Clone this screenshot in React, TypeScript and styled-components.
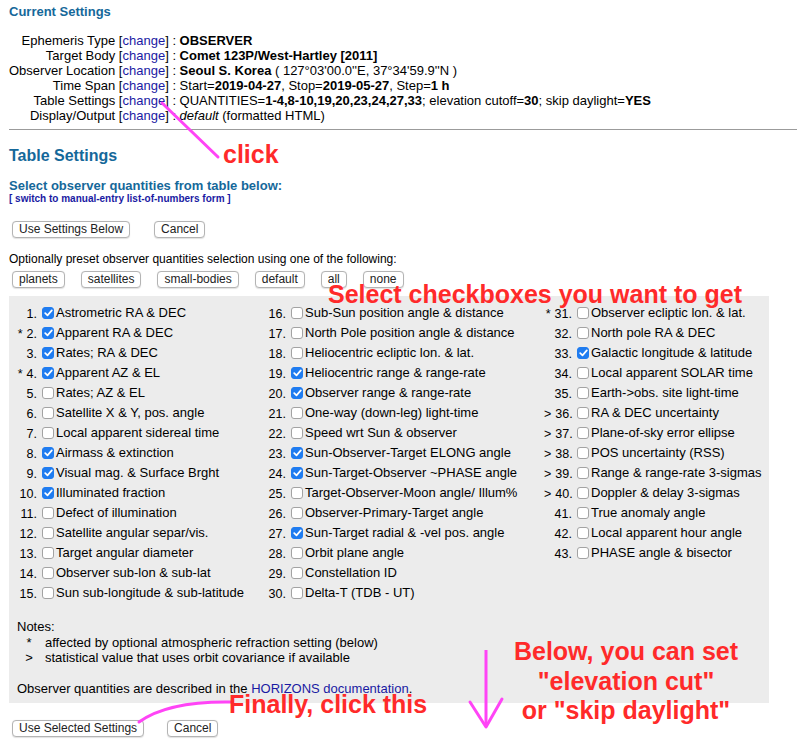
import React from "react";
import styled, { createGlobalStyle } from "styled-components";

const GlobalStyle = createGlobalStyle`
  html, body { margin: 0; padding: 0; background: #fff; }
  body { font-family: "Liberation Sans", Arial, Helvetica, sans-serif; color: #000; }
  * { box-sizing: border-box; }
`;

const TEAL = "#15689a";
const LINK = "#1a1aa3";
const RED = "#ff2a2a";
const MAGENTA = "#ff44f6";

const Page = styled.div`
  position: relative;
  width: 798px;
  height: 739px;
  overflow: hidden;
  padding: 4px 1px 0 9px;
`;

const H3 = styled.div`
  color: ${TEAL};
  font-weight: bold;
  font-size: 13px;
  line-height: 16px;
`;

const SettingsGrid = styled.div`
  margin-top: 12.5px;
  display: grid;
  grid-template-columns: max-content 1fr;
  font-size: 13px;
  line-height: 15px;
`;

const Label = styled.div`
  text-align: right;
  white-space: nowrap;
`;

const Value = styled.div`
  white-space: nowrap;
`;

const Link = styled.a`
  color: ${LINK};
  text-decoration: none;
`;

const Rule = styled.div`
  margin-top: 6px;
  height: 1px;
  background: #9b9b9b;
`;

const H2 = styled.div`
  margin-top: 16px;
  color: ${TEAL};
  font-weight: bold;
  font-size: 16px;
  line-height: 20px;
`;

const SubHead = styled.div`
  margin-top: 13px;
  color: ${TEAL};
  font-weight: bold;
  font-size: 13px;
  line-height: 14px;
`;

const Switch = styled.div`
  font-size: 10px;
  font-weight: bold;
  line-height: 12px;
  color: ${LINK};
`;

const ButtonRow = styled.div<{ $gap: number; $top: number }>`
  display: flex;
  gap: ${(p) => p.$gap}px;
  margin-top: ${(p) => p.$top}px;
  padding-left: 3px;
`;

const Btn = styled.button`
  height: 17px;
  padding: 0 6px;
  font-family: "Liberation Sans", Arial, sans-serif;
  font-size: 12px;
  line-height: 15px;
  color: #222;
  background: #fff;
  border: 1px solid #b4b4b4;
  border-radius: 4px;
  box-shadow: 0 0.5px 1px rgba(0, 0, 0, 0.12);
`;

const Para = styled.div`
  margin-top: 14.5px;
  font-size: 12px;
  line-height: 15px;
`;

const Panel = styled.div`
  margin-top: 8px;
  width: 760px;
  height: 407px;
  background: #ececec;
  padding: 7px 0 0 0;
  font-size: 13px;
`;

const Grid = styled.div`
  display: grid;
  grid-template-columns: 249px 286px 1fr;
  grid-template-rows: repeat(15, 20px);
  grid-auto-flow: column;
`;

const Item = styled.div`
  display: flex;
  align-items: center;
  white-space: nowrap;
  line-height: 20px;
`;

const Num = styled.span`
  width: 28px;
  text-align: right;
  padding-top: 2px;
  font-size: 12.5px;
`;

const Mark = styled.span`
  margin-right: 4px;
`;

const Box = styled.span<{ $on: boolean }>`
  margin-left: 5px;
  margin-right: 2px;
  width: 12px;
  height: 12px;
  border-radius: 3px;
  flex: none;
  display: inline-flex;
  align-items: center;
  justify-content: center;
  background: ${(p) => (p.$on ? "#1f7cf0" : "#fff")};
  border: 1px solid ${(p) => (p.$on ? "#1f7cf0" : "#a3a3a3")};
`;

const Notes = styled.div`
  margin-top: 16.5px;
  padding-left: 8px;
  line-height: 15.5px;
`;

const NoteRow = styled.div`
  display: grid;
  grid-template-columns: 24px 1fr;
  column-gap: 4px;
`;

const NoteMark = styled.span`
  text-align: center;
`;

const Described = styled.div`
  margin-top: 15px;
  padding-left: 8px;
  line-height: 15px;
`;

const Overlay = styled.svg`
  position: absolute;
  left: 0;
  top: 0;
  pointer-events: none;
`;

const Note = styled.div<{ $x: number; $y: number }>`
  position: absolute;
  left: ${(p) => p.$x}px;
  top: ${(p) => p.$y}px;
  color: ${RED};
  font-weight: bold;
  font-size: 25px;
  line-height: 29.5px;
  white-space: nowrap;
`;

const CenterNote = styled(Note)`
  width: 280px;
  text-align: center;
`;

type Q = [string, number, boolean, string];

const items: Q[] = [
  ["", 1, true, "Astrometric RA & DEC"],
  ["*", 2, true, "Apparent RA & DEC"],
  ["", 3, true, "Rates; RA & DEC"],
  ["*", 4, true, "Apparent AZ & EL"],
  ["", 5, false, "Rates; AZ & EL"],
  ["", 6, false, "Satellite X & Y, pos. angle"],
  ["", 7, false, "Local apparent sidereal time"],
  ["", 8, true, "Airmass & extinction"],
  ["", 9, true, "Visual mag. & Surface Brght"],
  ["", 10, true, "Illuminated fraction"],
  ["", 11, false, "Defect of illumination"],
  ["", 12, false, "Satellite angular separ/vis."],
  ["", 13, false, "Target angular diameter"],
  ["", 14, false, "Observer sub-lon & sub-lat"],
  ["", 15, false, "Sun sub-longitude & sub-latitude"],
  ["", 16, false, "Sub-Sun position angle & distance"],
  ["", 17, false, "North Pole position angle & distance"],
  ["", 18, false, "Heliocentric ecliptic lon. & lat."],
  ["", 19, true, "Heliocentric range & range-rate"],
  ["", 20, true, "Observer range & range-rate"],
  ["", 21, false, "One-way (down-leg) light-time"],
  ["", 22, false, "Speed wrt Sun & observer"],
  ["", 23, true, "Sun-Observer-Target ELONG angle"],
  ["", 24, true, "Sun-Target-Observer ~PHASE angle"],
  ["", 25, false, "Target-Observer-Moon angle/ Illum%"],
  ["", 26, false, "Observer-Primary-Target angle"],
  ["", 27, true, "Sun-Target radial & -vel pos. angle"],
  ["", 28, false, "Orbit plane angle"],
  ["", 29, false, "Constellation ID"],
  ["", 30, false, "Delta-T (TDB - UT)"],
  ["*", 31, false, "Observer ecliptic lon. & lat."],
  ["", 32, false, "North pole RA & DEC"],
  ["", 33, true, "Galactic longitude & latitude"],
  ["", 34, false, "Local apparent SOLAR time"],
  ["", 35, false, "Earth->obs. site light-time"],
  [">", 36, false, "RA & DEC uncertainty"],
  [">", 37, false, "Plane-of-sky error ellipse"],
  [">", 38, false, "POS uncertainty (RSS)"],
  [">", 39, false, "Range & range-rate 3-sigmas"],
  [">", 40, false, "Doppler & delay 3-sigmas"],
  ["", 41, false, "True anomaly angle"],
  ["", 42, false, "Local apparent hour angle"],
  ["", 43, false, "PHASE angle & bisector"],
];

const Check = () => (
  <svg width="9" height="8" viewBox="0 0 9 8">
    <path d="M1.2 4.2 L3.5 6.4 L7.8 1.4" fill="none" stroke="#fff" strokeWidth="1.7" strokeLinecap="round" strokeLinejoin="round" />
  </svg>
);

const Change = () => (
  <>
    {" "}[<Link href="#">change</Link>]
  </>
);

export default function App() {
  return (
    <>
      <GlobalStyle />
      <Page>
        <H3>Current Settings</H3>
        <SettingsGrid>
          <Label>Ephemeris Type<Change /></Label>
          <Value>&nbsp;: <b>OBSERVER</b></Value>
          <Label>Target Body<Change /></Label>
          <Value>&nbsp;: <b>Comet 123P/West-Hartley [2011]</b></Value>
          <Label>Observer Location<Change /></Label>
          <Value>&nbsp;: <b>Seoul S. Korea</b> ( 127°03'00.0''E, 37°34'59.9''N )</Value>
          <Label>Time Span<Change /></Label>
          <Value>&nbsp;: Start=<b>2019-04-27</b>, Stop=<b>2019-05-27</b>, Step=<b>1 h</b></Value>
          <Label>Table Settings<Change /></Label>
          <Value>&nbsp;: QUANTITIES=<b>1-4,8-10,19,20,23,24,27,33</b>; elevation cutoff=<b>30</b>; skip daylight=<b>YES</b></Value>
          <Label>Display/Output<Change /></Label>
          <Value>&nbsp;: <i>default</i> (formatted HTML)</Value>
        </SettingsGrid>
        <Rule />
        <H2>Table Settings</H2>
        <SubHead>Select observer quantities from table below:</SubHead>
        <Switch>[ switch to manual-entry list-of-numbers form ]</Switch>
        <ButtonRow $gap={24} $top={16}>
          <Btn>Use Settings Below</Btn>
          <Btn>Cancel</Btn>
        </ButtonRow>
        <Para>Optionally preset observer quantities selection using one of the following:</Para>
        <ButtonRow $gap={16} $top={3.5}>
          <Btn>planets</Btn>
          <Btn>satellites</Btn>
          <Btn>small-bodies</Btn>
          <Btn>default</Btn>
          <Btn>all</Btn>
          <Btn>none</Btn>
        </ButtonRow>
        <Panel>
          <Grid>
            {items.map(([m, n, on, t]) => (
              <Item key={n}>
                <Num>
                  {m && <Mark>{m}</Mark>}
                  {n}.
                </Num>
                <Box $on={on}>{on && <Check />}</Box>
                {t}
              </Item>
            ))}
          </Grid>
          <Notes>
            Notes:
            <NoteRow>
              <NoteMark>*</NoteMark>
              <span>affected by optional atmospheric refraction setting (below)</span>
            </NoteRow>
            <NoteRow>
              <NoteMark>&gt;</NoteMark>
              <span>statistical value that uses orbit covariance if available</span>
            </NoteRow>
          </Notes>
          <Described>
            Observer quantities are described in the <Link href="#">HORIZONS documentation</Link>.
          </Described>
        </Panel>
        <ButtonRow $gap={23} $top={17}>
          <Btn>Use Selected Settings</Btn>
          <Btn>Cancel</Btn>
        </ButtonRow>

        <Overlay width="798" height="739" viewBox="0 0 798 739">
          <line x1="162" y1="103" x2="218" y2="157" stroke={MAGENTA} strokeWidth="3" strokeLinecap="round" />
          <path d="M139 722 Q168 701 231 702" fill="none" stroke={MAGENTA} strokeWidth="3" strokeLinecap="round" />
          <line x1="486" y1="650" x2="486" y2="727" stroke={MAGENTA} strokeWidth="3" />
          <path d="M470 702 L486 727 L502 699" fill="none" stroke={MAGENTA} strokeWidth="3" strokeLinecap="round" strokeLinejoin="round" />
        </Overlay>
        <Note $x={223} $y={140}>click</Note>
        <Note $x={328} $y={280}>Select checkboxes you want to get</Note>
        <Note $x={229} $y={690}>Finally, click this</Note>
        <CenterNote $x={486} $y={637}>
          Below, you can set
          <br />
          "elevation cut"
          <br />
          or "skip daylight"
        </CenterNote>
      </Page>
    </>
  );
}
